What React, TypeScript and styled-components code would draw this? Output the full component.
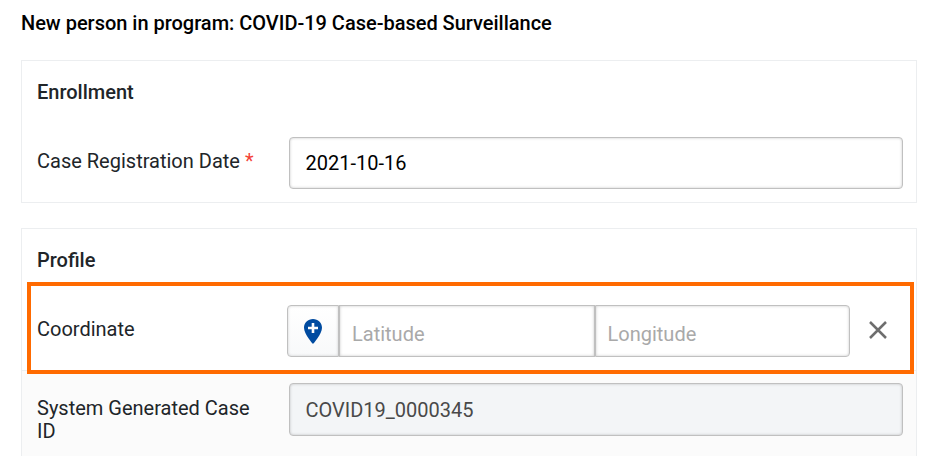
import React from "react";
import styled, { createGlobalStyle } from "styled-components";

const GlobalStyle = createGlobalStyle`
  *, *::before, *::after { box-sizing: border-box; }
  html, body { margin: 0; height: 100%; overflow: hidden; background: #fff; }
  body { font-family: Roboto, "Liberation Sans", sans-serif; font-size: 20px; color: #212529; }
`;

const Page = styled.main`
  display: flex;
  flex-direction: column;
  width: 931px;
  height: 456px;
  overflow: hidden;
  padding: 11px 14px 0 21px;
`;

const PageTitle = styled.h1`
  margin: 0 0 25px;
  font-size: 20px;
  line-height: 24px;
  font-weight: 500;
  letter-spacing: -0.015px;
  color: #000;
`;

const Section = styled.section<{ $height: number }>`
  flex: none;
  height: ${(p) => p.$height}px;
  margin-bottom: 25px;
  border: 1px solid #eceef0;
  background: #fff;
`;

const SectionTitle = styled.h2`
  margin: 0;
  padding: 19px 15px 0;
  height: 53px;
  font-size: 20px;
  line-height: 24px;
  font-weight: 500;
`;

const Row = styled.div<{ $height: number; $top: number; $shaded?: boolean }>`
  display: flex;
  align-items: flex-start;
  height: ${(p) => p.$height}px;
  padding: ${(p) => p.$top}px 13px 0 15px;
  background: ${(p) => (p.$shaded ? "#fbfbfb" : "#fff")};
  border-top: ${(p) => (p.$shaded ? "1px solid #eceef0" : "none")};
`;

const Label = styled.label<{ $top: number }>`
  flex: none;
  width: 252px;
  padding: ${(p) => p.$top}px 30px 0 0;
  line-height: 23px;
`;

const Required = styled.span`
  color: #f44336;
`;

const Field = styled.input`
  display: block;
  flex: 1;
  min-width: 0;
  height: 52px;
  margin: 0;
  padding: 0 15.5px;
  border: 1px solid #c0c0c0;
  border-radius: 4px;
  background: #fff;
  box-shadow: inset 0 0 3px rgba(0, 0, 0, 0.22);
  font: inherit;
  color: #000;
  outline: none;
  &:disabled {
    height: 53px;
    background: #f3f5f7;
    color: #494949;
  }
`;

const CoordinateGroup = styled.div`
  display: flex;
  width: 563px;
  height: 52px;
  margin-left: -2px;
`;

const MapButton = styled.button`
  display: flex;
  align-items: center;
  justify-content: center;
  width: 52px;
  padding: 0;
  border: 1px solid #c0c0c0;
  border-radius: 4px 0 0 4px;
  background: linear-gradient(#fff, #f8f9fa);
  box-shadow: inset 0 0 3px rgba(0, 0, 0, 0.18);
`;

const CoordinateField = styled(Field)<{ $last?: boolean }>`
  flex: none;
  width: ${(p) => (p.$last ? 255 : 256)}px;
  padding: 5px 12px 0 ${(p) => (p.$last ? 11.5 : 12)}px;
  border-radius: ${(p) => (p.$last ? "0 4px 4px 0" : "0")};
  &::placeholder { color: #a9a9a9; opacity: 1; }
`;

const ClearButton = styled.button`
  display: flex;
  align-items: center;
  justify-content: center;
  width: 30px;
  height: 50px;
  margin-left: 13px;
  padding: 0;
  border: 0;
  background: none;
`;

const HighlightAnchor = styled.div`
  position: relative;
`;

const Highlight = styled.div`
  position: absolute;
  z-index: 1;
  top: 0;
  left: 5px;
  width: 887px;
  height: 92px;
  border: 4px solid #ff6a00;
  pointer-events: none;
`;

const PinIcon = () => (
  <svg width="18" height="25" viewBox="0 0 18 25" aria-hidden="true">
    <path
      fill="#004ba0"
      d="M9 0C4.03 0 0 3.9 0 8.75C0 15.3 9 25 9 25S18 15.3 18 8.75C18 3.9 13.97 0 9 0ZM14 10.2H10.3V14H7.7V10.2H4V7.7H7.7V4H10.3V7.7H14Z"
    />
  </svg>
);

const CloseIcon = () => (
  <svg width="20" height="20" viewBox="0 0 20 20" aria-hidden="true">
    <path d="M2 2L18 18M18 2L2 18" fill="none" stroke="#6e6e6e" strokeWidth="2.5" />
  </svg>
);

export default function App() {
  return (
    <>
      <GlobalStyle />
      <Page>
        <PageTitle>New person in program: COVID-19 Case-based Surveillance</PageTitle>
        <Section $height={143}>
          <SectionTitle>Enrollment</SectionTitle>
          <Row $height={88} $top={23}>
            <Label htmlFor="date" $top={13}>
              Case Registration Date <Required>*</Required>
            </Label>
            <Field id="date" defaultValue="2021-10-16" />
          </Row>
        </Section>
        <Section $height={260}>
          <SectionTitle>Profile</SectionTitle>
          <HighlightAnchor>
            <Highlight />
            <Row $height={88} $top={23}>
              <Label htmlFor="latitude" $top={13}>Coordinate</Label>
              <CoordinateGroup>
                <MapButton type="button" aria-label="Pick on map"><PinIcon /></MapButton>
                <CoordinateField id="latitude" placeholder="Latitude" />
                <CoordinateField $last placeholder="Longitude" aria-label="Longitude" />
              </CoordinateGroup>
              <ClearButton type="button" aria-label="Clear"><CloseIcon /></ClearButton>
            </Row>
          </HighlightAnchor>
          <Row $height={117} $top={12} $shaded>
            <Label htmlFor="case-id" $top={14}>System Generated Case ID</Label>
            <Field id="case-id" defaultValue="COVID19_0000345" disabled />
          </Row>
        </Section>
      </Page>
    </>
  );
}
